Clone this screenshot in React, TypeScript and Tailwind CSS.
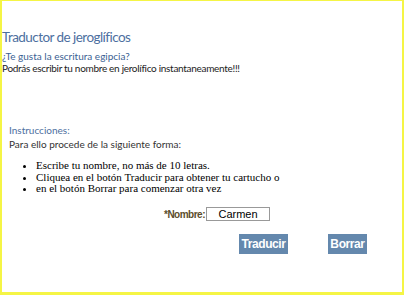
export default function App() {
  return (
    <div className="h-[295px] w-[404px] overflow-hidden border-t border-l-2 border-r-2 border-b-[3px] border-[#f5f545] bg-white">
      <div className="pt-[27px] font-['Lato',sans-serif]">
        <h1 className="text-[13.5px] leading-[18px] tracking-[-0.55px] text-[#4d6fa0]">Traductor de jeroglíficos</h1>
        <p className="mt-[4px] text-[10px] leading-[12px] text-[#3b5f93]">¿Te gusta la escritura egipcia?</p>
        <p className="text-[10px] leading-[12px] tracking-[-0.3px] text-[#222]">Podrás escribir tu nombre en jerolífico instantaneamente!!!</p>
      </div>
      <div className="mt-[50px] pl-[7px] font-['Lato',sans-serif]">
        <p className="text-[10px] leading-[13px] text-[#4d6fa0]">Instrucciones:</p>
        <p className="mt-[1px] text-[10px] leading-[13px] text-[#333]">Para ello procede de la siguiente forma:</p>
      </div>
      <ul className="mt-[9px] list-disc pl-[34px] font-['Liberation_Serif',serif] text-[11px] leading-[11.5px] text-black">
        <li>Escribe tu nombre, no más de 10 letras.</li>
        <li>Cliquea en el botón Traducir para obtener tu cartucho o</li>
        <li>en el botón Borrar para comenzar otra vez</li>
      </ul>
      <div className="mt-[12px] flex items-center pl-[162px] font-['Liberation_Sans',sans-serif] text-[11px]">
        <span className="text-[10px] font-bold tracking-[-0.5px] text-[#5b4d2c]">*Nombre:</span>
        <div className="ml-[1px] flex h-[14px] w-[64px] items-center justify-center border border-[#999] text-black">Carmen</div>
      </div>
      <div className="mt-[12px] flex pl-[237px] font-['Liberation_Sans',sans-serif] text-[12px] font-bold text-white">
        <button className="h-[20px] w-[49px] bg-[#6488ad] pt-[1px] text-center leading-[14px] tracking-[-0.4px]">Traducir</button>
        <button className="ml-[40px] h-[20px] w-[39px] bg-[#6488ad] pt-[1px] text-center leading-[14px] tracking-[-0.4px]">Borrar</button>
      </div>
    </div>
  );
}
